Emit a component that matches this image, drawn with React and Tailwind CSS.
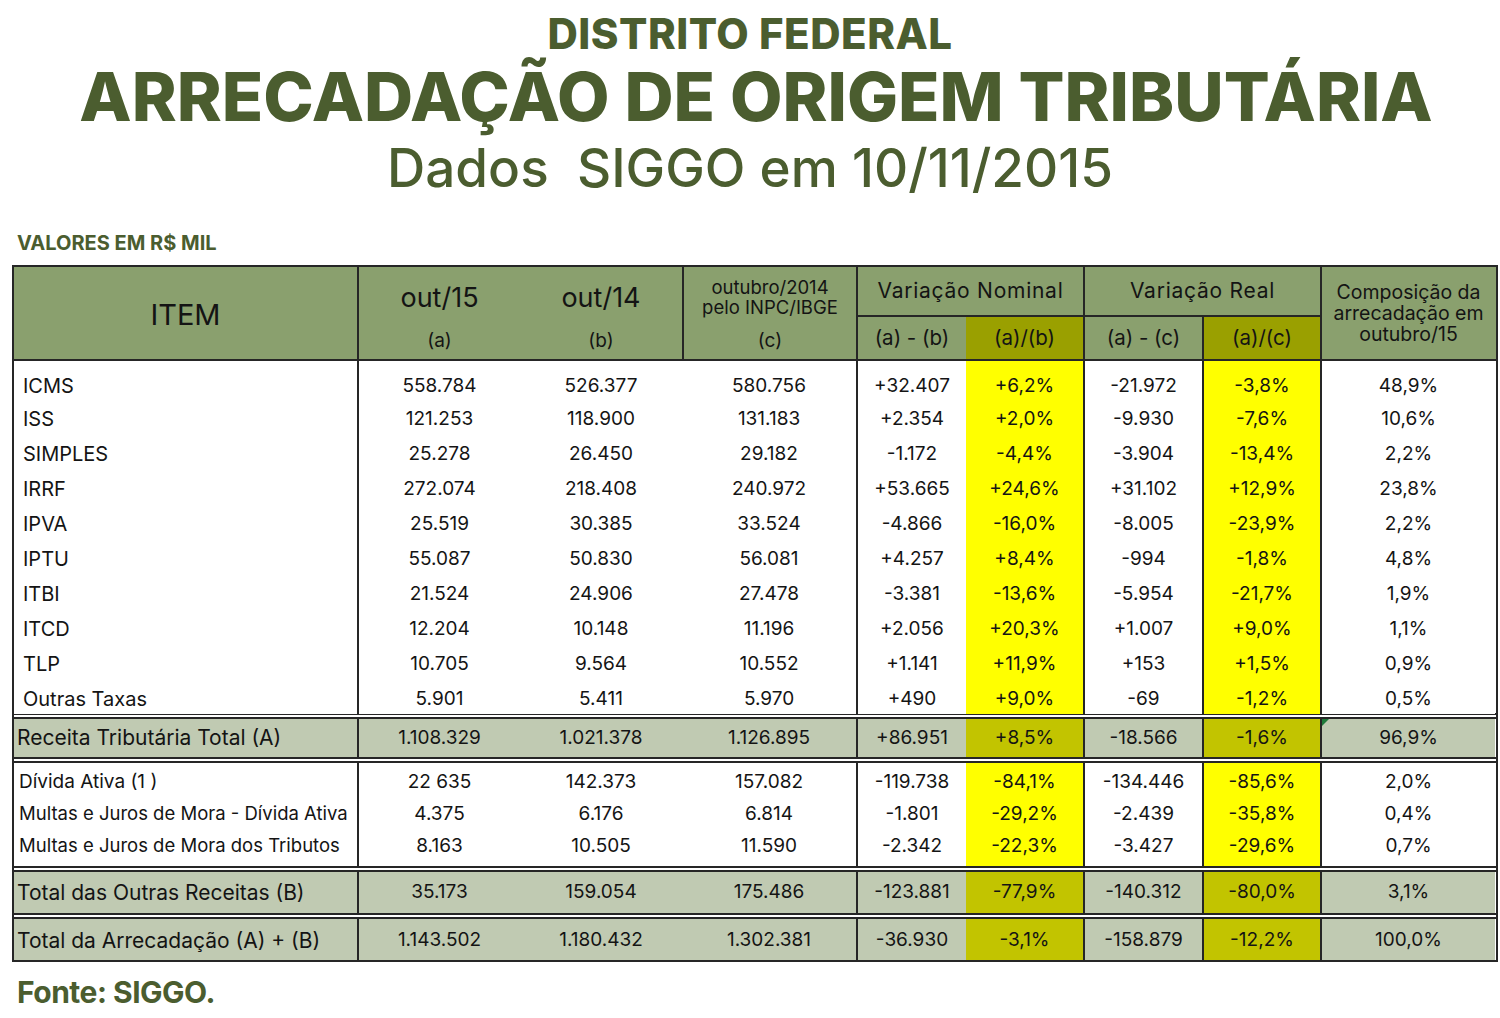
const COLS =
  "grid grid-cols-[343px_163px_162px_174px_110px_117px_119px_118px_175px]";

// vertical lines per column in body and total rows
const lineCls = ["", "border-l-2", "", "", "border-l-2", "", "border-l-2", "border-l-2", "border-l-2"];

const body = [
  ["ICMS", "558.784", "526.377", "580.756", "+32.407", "+6,2%", "-21.972", "-3,8%", "48,9%"],
  ["ISS", "121.253", "118.900", "131.183", "+2.354", "+2,0%", "-9.930", "-7,6%", "10,6%"],
  ["SIMPLES", "25.278", "26.450", "29.182", "-1.172", "-4,4%", "-3.904", "-13,4%", "2,2%"],
  ["IRRF", "272.074", "218.408", "240.972", "+53.665", "+24,6%", "+31.102", "+12,9%", "23,8%"],
  ["IPVA", "25.519", "30.385", "33.524", "-4.866", "-16,0%", "-8.005", "-23,9%", "2,2%"],
  ["IPTU", "55.087", "50.830", "56.081", "+4.257", "+8,4%", "-994", "-1,8%", "4,8%"],
  ["ITBI", "21.524", "24.906", "27.478", "-3.381", "-13,6%", "-5.954", "-21,7%", "1,9%"],
  ["ITCD", "12.204", "10.148", "11.196", "+2.056", "+20,3%", "+1.007", "+9,0%", "1,1%"],
  ["TLP", "10.705", "9.564", "10.552", "+1.141", "+11,9%", "+153", "+1,5%", "0,9%"],
  ["Outras Taxas", "5.901", "5.411", "5.970", "+490", "+9,0%", "-69", "-1,2%", "0,5%"],
];

const receita = ["Receita Tributária Total (A)", "1.108.329", "1.021.378", "1.126.895", "+86.951", "+8,5%", "-18.566", "-1,6%", "96,9%"];

const outras = [
  ["Dívida Ativa (1 )", "22 635", "142.373", "157.082", "-119.738", "-84,1%", "-134.446", "-85,6%", "2,0%"],
  ["Multas e Juros de Mora - Dívida Ativa", "4.375", "6.176", "6.814", "-1.801", "-29,2%", "-2.439", "-35,8%", "0,4%"],
  ["Multas e Juros de Mora dos Tributos", "8.163", "10.505", "11.590", "-2.342", "-22,3%", "-3.427", "-29,6%", "0,7%"],
];

const totalB = ["Total das Outras Receitas (B)", "35.173", "159.054", "175.486", "-123.881", "-77,9%", "-140.312", "-80,0%", "3,1%"];
const totalAB = ["Total da Arrecadação (A) + (B)", "1.143.502", "1.180.432", "1.302.381", "-36.930", "-3,1%", "-158.879", "-12,2%", "100,0%"];

function Row({ cells, h, total, labelCls, pad = "", marker }) {
  return (
    <div className={`${COLS} ${h}`}>
      {cells.map((c, i) => {
        const yellow = i === 5 || i === 7;
        const bg = total
          ? yellow ? "bg-[#c2c400]" : "bg-[#c0cab2]"
          : yellow ? "bg-[#ffff00]" : "bg-white";
        return (
          <div
            key={i}
            className={`relative flex items-center ${pad} ${lineCls[i]} border-[#262626] ${bg} ${
              i === 0 ? labelCls : "justify-center text-[19px]"
            }`}
          >
            {marker && i === 8 && (
              <span className="absolute left-0 top-0 w-0 h-0 border-t-[7px] border-r-[7px] border-t-[#1f7a3a] border-r-transparent" />
            )}
            {c}
          </div>
        );
      })}
    </div>
  );
}

const Double = () => <div className="border-t-[6px] border-double border-[#262626]" />;

export default function App() {
  return (
    <div className="w-[1500px] h-[1018px] bg-white font-['Inter',sans-serif] text-[#141414] overflow-hidden">
      {/* titles */}
      <div className="flex flex-col items-center text-[#4b5d2f] pt-[14px]">
        <h2 className="text-[42px] leading-[40px] font-extrabold tracking-[0.5px]">DISTRITO FEDERAL</h2>
        <h1 className="ml-[12px] text-[68px] leading-[84px] font-extrabold">
          ARRECADAÇÃO DE ORIGEM TRIBUTÁRIA
        </h1>
        <p className="text-[53px] leading-[60px] font-medium whitespace-pre">Dados  SIGGO em 10/11/2015</p>
      </div>

      <p className="mt-[35px] ml-[17px] text-[20px] leading-[20px] font-bold text-[#4b5d2f]">VALORES EM R$ MIL</p>

      {/* table */}
      <div className="mt-[12px] ml-[12px] w-[1486px] border-2 border-[#262626]">
        {/* header */}
        <div className={`${COLS} grid-rows-[50px_42px] bg-[#8aa06e] border-b-2 border-[#262626]`}>
          <div className="row-span-2 flex items-center justify-center pt-[3px] text-[29px]">ITEM</div>
          <div className="row-span-2 border-l-2 border-[#262626] flex flex-col items-center">
            <span className="h-[62px] pt-[16px] text-[27px] leading-[30px]">out/15</span>
            <span className="text-[19px] leading-[24px]">(a)</span>
          </div>
          <div className="row-span-2 flex flex-col items-center">
            <span className="h-[62px] pt-[16px] text-[27px] leading-[30px]">out/14</span>
            <span className="text-[19px] leading-[24px]">(b)</span>
          </div>
          <div className="row-span-2 border-l-2 border-[#262626] flex flex-col items-center">
            <span className="h-[62px] pt-[10px] text-[18.5px] leading-[20px] text-center">
              outubro/2014
              <br />
              pelo INPC/IBGE
            </span>
            <span className="text-[19px] leading-[24px]">(c)</span>
          </div>
          <div className="col-span-2 border-l-2 border-b-2 border-[#262626] flex items-center justify-center text-[21px] tracking-[0.75px]">
            Variação Nominal
          </div>
          <div className="col-span-2 border-l-2 border-b-2 border-[#262626] flex items-center justify-center text-[21px] tracking-[0.75px]">
            Variação Real
          </div>
          <div className="row-span-2 col-start-9 row-start-1 border-l-2 border-[#262626] flex items-center justify-center text-center text-[19.5px] leading-[21px]">
            Composição da
            <br />
            arrecadação em
            <br />
            outubro/15
          </div>
          <div className="col-start-5 row-start-2 border-l-2 border-[#262626] flex items-center justify-center text-[20.5px]">(a) - (b)</div>
          <div className="col-start-6 row-start-2 bg-[#9aa000] flex items-center justify-center text-[20.5px]">(a)/(b)</div>
          <div className="col-start-7 row-start-2 border-l-2 border-[#262626] flex items-center justify-center text-[20.5px]">(a) - (c)</div>
          <div className="col-start-8 row-start-2 border-l-2 border-[#262626] bg-[#9aa000] flex items-center justify-center text-[20.5px]">(a)/(c)</div>
        </div>

        {/* taxes */}
        {body.map((r, i) => (
          <Row
            key={r[0]}
            cells={r}
            h={i === 0 ? "h-[37px]" : "h-[35px]"}
            pad={i === 0 ? "pt-[10px]" : "pt-[6px]"}
            labelCls="pl-[9px] text-[20px]"
          />
        ))}
        <Double />
        <Row cells={receita} h="h-[38px]" total marker labelCls="pl-[3px] text-[21px]" />
        <Double />
        <Row cells={outras[0]} h="h-[34px]" pad="pt-[5px]" labelCls="pl-[5px] text-[19px]" />
        <Row cells={outras[1]} h="h-[32px]" pad="pt-[2px]" labelCls="pl-[5px] text-[18.5px]" />
        <Row cells={outras[2]} h="h-[37px]" pad="pb-[3px]" labelCls="pl-[5px] text-[18.5px]" />
        <Double />
        <Row cells={totalB} h="h-[41px]" total labelCls="pl-[3px] text-[21px]" />
        <Double />
        <Row cells={totalAB} h="h-[41px]" total pad="pt-[2px]" labelCls="pl-[3px] text-[21px]" />
      </div>

      <p className="mt-[15px] ml-[17px] text-[30px] leading-[30px] font-bold text-[#4b5d2f] tracking-[-0.5px]">Fonte: SIGGO.</p>
    </div>
  );
}
